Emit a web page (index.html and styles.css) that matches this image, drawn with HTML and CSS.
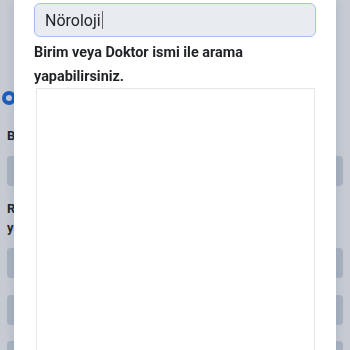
FILE: index.html
```html
<!DOCTYPE html>
<html lang="tr">
<head>
<meta charset="utf-8">
<title>Birim Arama</title>
<link rel="stylesheet" href="styles.css">
</head>
<body>
<div class="page">
  <div class="radio-row"><span class="radio"></span></div>
  <div class="field-label one">Birim</div>
  <div class="field-input"></div>
  <div class="field-label two">Randevu almak istediğiniz birimi<br>yazınız</div>
  <div class="field-input"></div>
  <div class="field-input gap"></div>
  <div class="field-input gap2"></div>
</div>
<div class="overlay">
  <div class="modal">
    <div class="search-box"><span class="search-text">Nöroloji</span><span class="caret"></span></div>
    <p class="hint">Birim veya Doktor ismi ile arama yapabilirsiniz.</p>
    <div class="result-list"></div>
  </div>
</div>
</body>
</html>
```

FILE: styles.css
```css
* { box-sizing: border-box; }
html, body { margin: 0; padding: 0; height: 100%; overflow: hidden; }
body {
  font-family: Roboto, "Noto Sans", "Liberation Sans", sans-serif;
  background: #ffffff;
  color: #212529;
}
.page {
  padding: 0 7px;
}
.radio-row {
  padding-top: 91px;
  margin-left: -5px;
  height: 105px;
}
.radio {
  display: block;
  width: 14px;
  height: 14px;
  border-radius: 50%;
  background: #1b6fe0;
  position: relative;
}
.radio::after {
  content: "";
  position: absolute;
  left: 4px; top: 4px;
  width: 6px; height: 6px;
  border-radius: 50%;
  background: #fff;
}
.field-label {
  font-weight: 700;
  font-size: 13px;
  line-height: 19px;
  white-space: nowrap;
}
.field-label.one { margin-top: 21px; }
.field-label.two { margin-top: 13px; }
.field-input {
  height: 30px;
  border-radius: 4px;
  background: #d9dee5;
  margin-top: 11px;
}
.field-input.gap { margin-top: 17px; }
.field-input.gap2 { margin-top: 16px; }
.overlay {
  position: fixed;
  inset: 0;
  background: rgba(30, 52, 84, 0.26);
  display: flex;
  justify-content: center;
}
.modal {
  width: 322px;
  height: 100%;
  background: #ffffff;
  padding: 3px 20px 0;
  box-shadow: 0 0 10px rgba(20, 30, 50, 0.12);
}
.search-box {
  height: 34px;
  border: 1.5px solid #a3c0ea;
  border-radius: 6px;
  background: #e8ebf0;
  display: flex;
  align-items: center;
  padding-left: 10px;
}
.search-text {
  font-size: 16px;
  color: #212529;
}
.caret {
  display: inline-block;
  width: 1px;
  height: 18px;
  background: #666;
  margin-left: 1px;
}
.hint {
  margin: 4px 0 0;
  font-size: 14.4px;
  font-weight: 700;
  line-height: 23.5px;
  color: #1f2328;
}
.result-list {
  margin: 0 1px 0 2px;
  height: 300px;
  border: 1px solid #e7e7e7;
  border-bottom: none;
}
```
